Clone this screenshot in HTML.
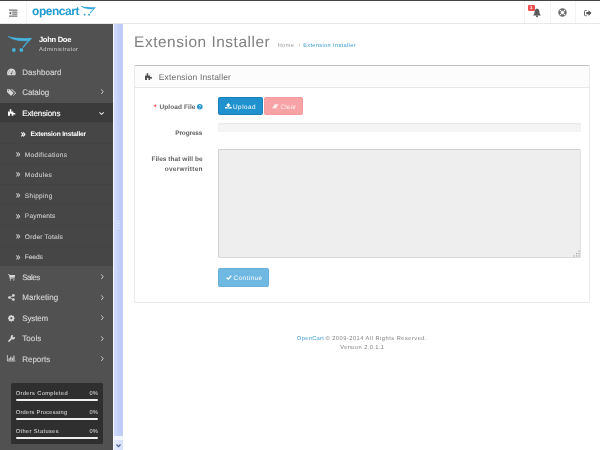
<!DOCTYPE html>
<html lang="en">
<head>
<meta charset="utf-8">
<title>Extension Installer</title>
<style>
*{box-sizing:border-box;margin:0;padding:0}
html,body{width:600px;height:450px;overflow:hidden;background:#fff}
body{font-family:"Liberation Sans",sans-serif;color:#666;font-size:6px;position:relative}
.abs{position:absolute}
svg{position:absolute;overflow:visible}
.t{position:absolute;white-space:nowrap;line-height:1}
#topline{left:0;top:0;width:600px;height:1px;background:#454545}
#header{left:0;top:1px;width:600px;height:23px;background:#fff;border-bottom:1px solid #e8e8e8}
.vdiv{position:absolute;top:0;width:1px;height:22px;background:#f3f3f3}
#side{left:0;top:24px;width:113px;height:426px;background:#515151}
.row{position:absolute;left:0;width:113px}
.sep{position:absolute;left:0;width:113px;height:1px;background:#434343}
.bar{position:absolute;left:16px;width:81.6px;height:2.2px;background:#efefef;border-radius:1.1px}
.btn{position:absolute;border-radius:1.6px}
</style>
</head>
<body>
<div id="wrap" style="position:absolute;left:0;top:0;width:600px;height:450px;will-change:transform;text-rendering:geometricPrecision">
<div class="abs" id="topline"></div>
<div class="abs" id="header">
  <div class="vdiv" style="left:26px"></div>
  <div class="vdiv" style="left:524px"></div>
  <div class="vdiv" style="left:550px"></div>
  <div class="vdiv" style="left:575px"></div>
  <svg id="burger" style="left:9px;top:8px;width:9px;height:8px" viewBox="0 0 9 8">
    <g fill="#555"><rect x="0" y="0.6" width="8.4" height="1"/><rect x="3.2" y="2.6" width="5.2" height="1"/><rect x="3.2" y="4.6" width="5.2" height="1"/><rect x="0" y="6.6" width="8.4" height="1"/><path d="M2.2 2.4 L0 4.1 L2.2 5.8 Z"/></g>
  </svg>
  <div class="abs" id="logo" style="left:32px;top:1.7px;font-size:12px;line-height:16px;font-weight:bold;color:#229dd2;letter-spacing:-.45px;white-space:nowrap">opencart</div>
  <svg id="logocart" style="left:80.7px;top:4.9px;width:14.7px;height:10.2px" viewBox="0 0 25 17" preserveAspectRatio="none">
    <path d="M0.3,0.6 C6,2.6 16,2.8 24.3,2.4 L24.4,2.9 C21,6 18,9 16,11.9 L15.5,11.5 C17.5,8.5 20,6 21.6,4.7 C14,5.4 6,4.6 0.3,0.6 Z" fill="#229dd2" stroke="#229dd2" stroke-width=".7"/>
    <rect x="4.6" y="12.9" width="3" height="3" rx="1" fill="#229dd2"/><rect x="12.3" y="12.9" width="3" height="3" rx="1" fill="#229dd2"/>
  </svg>
  <svg id="bell" style="left:532px;top:7px;width:10px;height:10px" viewBox="0 0 10 10">
    <path d="M5 0.6 C3.2 0.8 2.6 2.4 2.6 4 C2.6 5.6 1.8 6.6 1 7.4 L9 7.4 C8.2 6.6 7.4 5.6 7.4 4 C7.4 2.4 6.8 0.8 5 0.6 Z" fill="#5a5a5a"/>
    <circle cx="5" cy="8.3" r="1" fill="#5a5a5a"/>
  </svg>
  <div class="abs" id="badge" style="left:528px;top:4px;width:6.5px;height:5.5px;background:#f0504f;border-radius:1px;color:#fff;font-size:4.5px;line-height:5.5px;text-align:center;font-weight:bold">1</div>
  <svg id="ring" style="left:558px;top:7.1px;width:9px;height:9px" viewBox="0 0 10 10">
    <circle cx="5" cy="5" r="3.3" fill="none" stroke="#6a6a6a" stroke-width="2.2"/>
    <g stroke="#fff" stroke-width="1.25"><path d="M5 0 V3 M5 7 V10 M0 5 H3 M7 5 H10" transform="rotate(45 5 5)"/></g>
    <circle cx="5" cy="5" r="4.3" fill="none" stroke="#6a6a6a" stroke-width=".6"/>
    <circle cx="5" cy="5" r="2.3" fill="none" stroke="#6a6a6a" stroke-width=".6"/>
  </svg>
  <svg id="signout" style="left:583.9px;top:8.7px;width:7.5px;height:6.2px" viewBox="0 0 7.5 6.2">
    <path d="M2.7 0.5 H1.3 Q0.5 0.5 0.5 1.3 V4.9 Q0.5 5.7 1.3 5.7 H2.7" fill="none" stroke="#5a5a5a" stroke-width=".95"/>
    <path d="M2.3 1.9 H4.5 V0.2 L7.5 3.1 L4.5 6 V4.3 H2.3 Z" fill="#555"/>
  </svg>
</div>

<div class="abs" id="side"></div>
<!-- active + submenu backgrounds -->
<div class="row" id="rowext" style="top:103px;height:19px;background:#3b3b3b"></div>
<div class="row" id="rowsub" style="top:122px;height:144px;background:#464646"></div>
<div class="sep" style="top:122px"></div>
<div class="sep" style="top:142.7px"></div>
<div class="sep" style="top:163.3px"></div>
<div class="sep" style="top:183.8px"></div>
<div class="sep" style="top:204.4px"></div>
<div class="sep" style="top:225px"></div>
<div class="sep" style="top:245.6px"></div>

<!-- scrollbar -->
<div class="abs" id="sbtrack" style="left:113px;top:24px;width:10px;height:426px;background:#f3f6fe"></div>
<div class="abs" id="sbthumb" style="left:114px;top:24px;width:9px;height:412px;background:linear-gradient(90deg,#d2ddfc 0%,#c6d4fa 40%,#bbcaf7 85%,#c8d4f9 100%)"></div>
<svg id="sbgrip" style="left:116px;top:220px;width:4px;height:9px" viewBox="0 0 4 9"><g fill="#d9e2fc"><rect x="0" y="0.8" width="4" height="1"/><rect x="0" y="3.2" width="4" height="1"/><rect x="0" y="5.6" width="4" height="1"/><rect x="0" y="8" width="4" height=".8"/></g></svg>
<div class="abs" id="sbbtn" style="left:114px;top:440px;width:9px;height:10px;background:linear-gradient(90deg,#e6ecfd,#d6e0fb)"></div>
<svg id="sbarrow" style="left:115.6px;top:443.6px;width:5px;height:3.4px" viewBox="0 0 5 3.4"><path d="M0.5 0.5 L2.5 2.6 L4.5 0.5" fill="none" stroke="#4a5c8c" stroke-width="1.1"/></svg>

<!-- profile cart -->
<svg id="pcart" style="left:8px;top:36.4px;width:24px;height:16.6px" viewBox="0 0 25 17" preserveAspectRatio="none">
  <path d="M0.3,0.6 C6,2.6 16,2.8 24.3,2.4 L24.4,2.9 C21,6 18,9 16,11.9 L15.5,11.5 C17.5,8.5 20,6 21.6,4.7 C14,5.4 6,4.6 0.3,0.6 Z" fill="#45b5df" stroke="#45b5df" stroke-width=".7" stroke-linejoin="round"/>
  <rect x="4.3" y="12.6" width="3.6" height="3.5" rx="1.2" fill="#45b5df"/><rect x="12.1" y="12.6" width="3.6" height="3.5" rx="1.2" fill="#45b5df"/>
</svg>

<!-- menu icons -->
<svg id="i1" style="left:7.1px;top:68.9px;width:8.8px;height:6.2px" viewBox="0 0 8.8 6.2">
  <path d="M0.5 6.2 A4.4 4.6 0 1 1 8.3 6.2 Z" fill="#d6d6d6"/>
  <path d="M4.4 4.8 L5.6 1.6" stroke="#515151" stroke-width=".7"/><circle cx="4.4" cy="4.7" r=".8" fill="#515151"/>
  <circle cx="1.7" cy="3.9" r=".45" fill="#515151"/><circle cx="2.6" cy="2" r=".45" fill="#515151"/><circle cx="7.1" cy="3.9" r=".45" fill="#515151"/>
</svg>
<svg id="i2" style="left:6.9px;top:88.7px;width:9.3px;height:6.8px" viewBox="0 0 9.3 6.8">
  <path d="M0 0.2 H2.9 L6.4 3.7 Q6.8 4.1 6.4 4.5 L4.4 6.5 Q4 6.9 3.6 6.5 L0 2.9 Z" fill="#d6d6d6"/>
  <path d="M3.9 0.2 H5.2 L8.9 3.7 Q9.3 4.1 8.9 4.5 L6.8 6.5 Q6.4 6.9 6 6.6 L7.6 4.9 Q8.2 4.1 7.6 3.5 Z" fill="#d6d6d6"/>
  <circle cx="1.3" cy="1.5" r=".6" fill="#515151"/>
</svg>
<svg id="i3" style="left:7.7px;top:108.9px;width:7.4px;height:6.8px" viewBox="0 0 7.3 7.3" preserveAspectRatio="none">
  <path d="M0,2.7 H1.9 V1.9 A1,1 0 1 1 3.1,1.9 V2.7 H5.3 V4.3 H6.2 A0.85,0.85 0 1 1 6.2,5.9 H5.3 V7.3 H3.6 V5.7 A0.8,0.8 0 0 0 2,5.7 V7.3 H0 Z" fill="#ffffff"/>
</svg>
<svg id="i4" style="left:8.2px;top:273.7px;width:7.2px;height:6.6px" viewBox="0 0 7.2 6.6">
  <path d="M0 0.3 H1.3 L1.6 1.1 H7.2 L6.6 3.8 H2.3 L2.5 4.4 H6.6 V5 H1.9 L0.9 0.9 H0 Z" fill="#d6d6d6"/>
  <circle cx="2.5" cy="5.9" r=".7" fill="#d6d6d6"/><circle cx="5.9" cy="5.9" r=".7" fill="#d6d6d6"/>
</svg>
<svg id="i5" style="left:8.2px;top:293.8px;width:6.8px;height:7px" viewBox="0 0 6.8 7">
  <path d="M5.4 1.4 L1.4 3.5 L5.4 5.6" fill="none" stroke="#d6d6d6" stroke-width=".8"/>
  <circle cx="5.4" cy="1.4" r="1.35" fill="#d6d6d6"/><circle cx="1.4" cy="3.5" r="1.35" fill="#d6d6d6"/><circle cx="5.4" cy="5.6" r="1.35" fill="#d6d6d6"/>
</svg>
<svg id="i6" style="left:8.2px;top:314.8px;width:6.6px;height:6.6px" viewBox="0 0 6.6 6.6">
  <circle cx="3.3" cy="3.3" r="2" fill="none" stroke="#d6d6d6" stroke-width="1.7"/>
  <g stroke="#d6d6d6" stroke-width="1.3"><path d="M3.3 0 V6.6 M0 3.3 H6.6"/><path d="M3.3 0 V6.6 M0 3.3 H6.6" transform="rotate(45 3.3 3.3)"/></g>
  <circle cx="3.3" cy="3.3" r="1.05" fill="#515151"/>
</svg>
<svg id="i7" style="left:8.2px;top:334.8px;width:7px;height:7px" viewBox="0 0 7 7">
  <path d="M0.9 6.1 L4.2 2.8" stroke="#d6d6d6" stroke-width="1.5" stroke-linecap="round"/>
  <path d="M6.9 1.7 A2.2 2.2 0 1 1 5.3 0.1 L4.4 1.3 L5.7 2.6 Z" fill="#d6d6d6"/>
</svg>
<svg id="i8" style="left:7px;top:355.4px;width:8.4px;height:6.4px" viewBox="0 0 8.4 6.4">
  <path d="M0.4 0 V6 H8.4" fill="none" stroke="#d6d6d6" stroke-width=".8"/>
  <g fill="#d6d6d6"><rect x="1.6" y="3.2" width="1.1" height="2.2"/><rect x="3.2" y="1.6" width="1.1" height="3.8"/><rect x="4.8" y="2.6" width="1.1" height="2.8"/><rect x="6.4" y="0.6" width="1.1" height="4.8"/></g>
</svg>
<!-- top-level chevrons -->
<svg class="chev" style="left:100.8px;top:89.3px;width:2.6px;height:5.4px" viewBox="0 0 2.6 5.4"><path d="M0.3 0.4 L2.2 2.7 L0.3 5" fill="none" stroke="#cfcfcf" stroke-width=".95"/></svg>
<svg class="chev" style="left:99.4px;top:111.8px;width:5.2px;height:2.8px" viewBox="0 0 5.2 2.8"><path d="M0.4 0.4 L2.6 2.3 L4.8 0.4" fill="none" stroke="#e6e6e6" stroke-width="1.05"/></svg>
<svg class="chev" style="left:100.8px;top:274.2px;width:2.6px;height:5.4px" viewBox="0 0 2.6 5.4"><path d="M0.3 0.4 L2.2 2.7 L0.3 5" fill="none" stroke="#cfcfcf" stroke-width=".95"/></svg>
<svg class="chev" style="left:100.8px;top:294.6px;width:2.6px;height:5.4px" viewBox="0 0 2.6 5.4"><path d="M0.3 0.4 L2.2 2.7 L0.3 5" fill="none" stroke="#cfcfcf" stroke-width=".95"/></svg>
<svg class="chev" style="left:100.8px;top:315.3px;width:2.6px;height:5.4px" viewBox="0 0 2.6 5.4"><path d="M0.3 0.4 L2.2 2.7 L0.3 5" fill="none" stroke="#cfcfcf" stroke-width=".95"/></svg>
<svg class="chev" style="left:100.8px;top:335.7px;width:2.6px;height:5.4px" viewBox="0 0 2.6 5.4"><path d="M0.3 0.4 L2.2 2.7 L0.3 5" fill="none" stroke="#cfcfcf" stroke-width=".95"/></svg>
<svg class="chev" style="left:100.8px;top:356.1px;width:2.6px;height:5.4px" viewBox="0 0 2.6 5.4"><path d="M0.3 0.4 L2.2 2.7 L0.3 5" fill="none" stroke="#cfcfcf" stroke-width=".95"/></svg>
<!-- submenu double chevrons -->
<svg class="dch" style="left:21px;top:131.5px;width:4.4px;height:4.8px" viewBox="0 0 4.4 4.4" preserveAspectRatio="none"><path d="M0.4 0.3 L2 2.2 L0.4 4.1 M2.3 0.3 L3.9 2.2 L2.3 4.1" fill="none" stroke="#fff" stroke-width="1.05"/></svg>
<svg class="dch" style="left:16px;top:152.3px;width:4.2px;height:4.8px" viewBox="0 0 4.4 4.4" preserveAspectRatio="none"><path d="M0.4 0.3 L2 2.2 L0.4 4.1 M2.3 0.3 L3.9 2.2 L2.3 4.1" fill="none" stroke="#cacaca" stroke-width=".95"/></svg>
<svg class="dch" style="left:16px;top:172.4px;width:4.2px;height:4.8px" viewBox="0 0 4.4 4.4" preserveAspectRatio="none"><path d="M0.4 0.3 L2 2.2 L0.4 4.1 M2.3 0.3 L3.9 2.2 L2.3 4.1" fill="none" stroke="#cacaca" stroke-width=".95"/></svg>
<svg class="dch" style="left:16px;top:193.1px;width:4.2px;height:4.8px" viewBox="0 0 4.4 4.4" preserveAspectRatio="none"><path d="M0.4 0.3 L2 2.2 L0.4 4.1 M2.3 0.3 L3.9 2.2 L2.3 4.1" fill="none" stroke="#cacaca" stroke-width=".95"/></svg>
<svg class="dch" style="left:16px;top:213.5px;width:4.2px;height:4.8px" viewBox="0 0 4.4 4.4" preserveAspectRatio="none"><path d="M0.4 0.3 L2 2.2 L0.4 4.1 M2.3 0.3 L3.9 2.2 L2.3 4.1" fill="none" stroke="#cacaca" stroke-width=".95"/></svg>
<svg class="dch" style="left:16px;top:234.2px;width:4.2px;height:4.8px" viewBox="0 0 4.4 4.4" preserveAspectRatio="none"><path d="M0.4 0.3 L2 2.2 L0.4 4.1 M2.3 0.3 L3.9 2.2 L2.3 4.1" fill="none" stroke="#cacaca" stroke-width=".95"/></svg>
<svg class="dch" style="left:16px;top:254.5px;width:4.2px;height:4.8px" viewBox="0 0 4.4 4.4" preserveAspectRatio="none"><path d="M0.4 0.3 L2 2.2 L0.4 4.1 M2.3 0.3 L3.9 2.2 L2.3 4.1" fill="none" stroke="#cacaca" stroke-width=".95"/></svg>

<!-- stats -->
<div class="abs" id="stats" style="left:11px;top:382.6px;width:91.8px;height:61.7px;background:#2f2f2f;border-radius:1.6px"></div>
<div class="bar" style="top:398.8px"></div>
<div class="bar" style="top:418.1px"></div>
<div class="bar" style="top:437px"></div>

<!-- panel -->
<div class="abs" id="panel" style="left:134px;top:65px;width:456px;height:238px;background:#fff;border:1px solid #ebebeb;border-top:1px solid #c0c0c0;border-radius:1.5px"></div>
<div class="abs" id="phead" style="left:135px;top:66px;width:454px;height:22.3px;background:#fcfcfc;border-bottom:1px solid #e8e8e8"></div>
<svg id="picon" style="left:144.5px;top:72.9px;width:7.1px;height:6.9px" preserveAspectRatio="none" viewBox="0 0 7.3 7.3">
  <path d="M0,2.7 H1.9 V1.9 A1,1 0 1 1 3.1,1.9 V2.7 H5.3 V4.3 H6.2 A0.85,0.85 0 1 1 6.2,5.9 H5.3 V7.3 H3.6 V5.7 A0.8,0.8 0 0 0 2,5.7 V7.3 H0 Z" fill="#4d4d4d"/>
</svg>

<!-- help icon -->
<svg id="help" style="left:196.8px;top:103.7px;width:5.6px;height:5.6px" viewBox="0 0 5.2 5.2"><circle cx="2.6" cy="2.6" r="2.6" fill="#1e91cf"/><path d="M1.8 2 C1.8 1.2 3.4 1.2 3.4 2 C3.4 2.6 2.6 2.5 2.6 3.2" fill="none" stroke="#fff" stroke-width=".7"/><circle cx="2.6" cy="4" r=".4" fill="#fff"/></svg>

<div class="btn" id="b1" style="left:218px;top:96.7px;width:44.5px;height:18.7px;background:#1f91ce;border:1px solid #1a7fb6"></div>
<svg id="upicon" style="left:225.3px;top:103.2px;width:6.7px;height:5.6px" viewBox="0 0 6.7 5.6"><path d="M3.35 0 L5.9 2.5 H4.3 V4 H2.4 V2.5 H0.8 Z" fill="#fff"/><path d="M0 3.9 H1.7 V4.5 H5 V3.9 H6.7 V5.6 H0 Z" fill="#fff"/></svg>
<div class="btn" id="b2" style="left:264.3px;top:96.7px;width:39px;height:18.7px;background:#f7a2a5;border:1px solid #f39a9d"></div>
<svg id="ericon" style="left:271.8px;top:103.8px;width:6.6px;height:4.8px" viewBox="0 0 7.5 5.2" preserveAspectRatio="none"><path d="M3.2 0.2 H7.5 L4.6 4.4 H0.3 Z" fill="#fdeeee"/><path d="M0 4.7 H6.6 V5.2 H0 Z" fill="#fdeeee" opacity=".6"/></svg>
<div class="abs" id="prog" style="left:218px;top:123.2px;width:363px;height:8.8px;background:#f4f4f4;border-radius:1.6px;box-shadow:inset 0 .5px 1px rgba(0,0,0,.09)"></div>
<div class="abs" id="ta" style="left:218px;top:148.5px;width:363px;height:109.3px;background:#eeeeee;border:1px solid #d0d0d0;border-right-color:#e0e0e0;border-bottom-color:#dadada;border-radius:1.6px"></div>
<svg id="grip" style="left:572.8px;top:250px;width:7.2px;height:7.2px" viewBox="0 0 7.2 7.2"><g fill="#a4a4a4"><rect x="5.4" y="0.6" width="1.2" height="1.2"/><rect x="5.4" y="3" width="1.2" height="1.2"/><rect x="5.4" y="5.4" width="1.2" height="1.2"/><rect x="3" y="3" width="1.2" height="1.2"/><rect x="3" y="5.4" width="1.2" height="1.2"/><rect x="0.6" y="5.4" width="1.2" height="1.2"/></g></svg>
<div class="btn" id="b3" style="left:218px;top:267.8px;width:51px;height:18.8px;background:#6fb8e1;border:1px solid #68b0da"></div>
<svg id="ckicon" style="left:225.9px;top:275.2px;width:5.9px;height:5px" viewBox="0 0 5.9 5"><path d="M0.6 2.7 L2.2 4.2 L5.3 0.8" fill="none" stroke="#fff" stroke-width="1.3"/></svg>

<div class="t" id="pname" style="left:38.94px;top:36.00px;font-size:7.6px;color:#ffffff;font-weight:bold;letter-spacing:-0.300px;">John Doe</div>
<div class="t" id="prole" style="left:39.06px;top:48.00px;font-size:5.7px;color:#cfcfcf;letter-spacing:0.447px;">Administrator</div>
<div class="t" id="m1" style="left:22.22px;top:69.00px;font-size:8.0px;color:#d2d2d2;letter-spacing:0.015px;-webkit-text-stroke:.15px;">Dashboard</div>
<div class="t" id="m2" style="left:22.22px;top:89.00px;font-size:8.0px;color:#d2d2d2;letter-spacing:-0.103px;-webkit-text-stroke:.15px;">Catalog</div>
<div class="t" id="m3" style="left:22.22px;top:110.00px;font-size:8.0px;color:#ffffff;letter-spacing:-0.098px;-webkit-text-stroke:.15px;">Extensions</div>
<div class="t" id="m4" style="left:22.22px;top:274.00px;font-size:8.0px;color:#d2d2d2;letter-spacing:-0.514px;-webkit-text-stroke:.15px;">Sales</div>
<div class="t" id="m5" style="left:22.22px;top:294.00px;font-size:8.0px;color:#d2d2d2;letter-spacing:0.117px;-webkit-text-stroke:.15px;">Marketing</div>
<div class="t" id="m6" style="left:22.22px;top:315.00px;font-size:8.0px;color:#d2d2d2;letter-spacing:-0.122px;-webkit-text-stroke:.15px;">System</div>
<div class="t" id="m7" style="left:22.22px;top:335.00px;font-size:8.0px;color:#d2d2d2;letter-spacing:0.093px;-webkit-text-stroke:.15px;">Tools</div>
<div class="t" id="m8" style="left:22.22px;top:356.00px;font-size:8.0px;color:#d2d2d2;letter-spacing:-0.009px;-webkit-text-stroke:.15px;">Reports</div>
<div class="t" id="s1" style="left:30.50px;top:132.00px;font-size:6.6px;color:#ffffff;font-weight:bold;letter-spacing:-0.167px;">Extension Installer</div>
<div class="t" id="s2" style="left:24.80px;top:153.00px;font-size:6.6px;color:#c6c6c6;letter-spacing:0.321px;-webkit-text-stroke:.12px;">Modifications</div>
<div class="t" id="s3" style="left:24.80px;top:173.00px;font-size:6.6px;color:#c6c6c6;letter-spacing:0.359px;-webkit-text-stroke:.12px;">Modules</div>
<div class="t" id="s4" style="left:24.80px;top:194.00px;font-size:6.6px;color:#c6c6c6;letter-spacing:0.274px;-webkit-text-stroke:.12px;">Shipping</div>
<div class="t" id="s5" style="left:24.80px;top:214.00px;font-size:6.6px;color:#c6c6c6;letter-spacing:0.181px;-webkit-text-stroke:.12px;">Payments</div>
<div class="t" id="s6" style="left:24.80px;top:235.00px;font-size:6.6px;color:#c6c6c6;letter-spacing:0.209px;-webkit-text-stroke:.12px;">Order Totals</div>
<div class="t" id="s7" style="left:24.80px;top:255.00px;font-size:6.6px;color:#c6c6c6;letter-spacing:-0.059px;-webkit-text-stroke:.12px;">Feeds</div>
<div class="t" id="st1" style="left:15.76px;top:392.00px;font-size:5.7px;color:#e0e0e0;letter-spacing:0.361px;">Orders Completed</div>
<div class="t" id="st2" style="left:15.76px;top:411.00px;font-size:5.7px;color:#e0e0e0;letter-spacing:0.267px;">Orders Processing</div>
<div class="t" id="st3" style="left:15.76px;top:430.00px;font-size:5.7px;color:#e0e0e0;letter-spacing:0.373px;">Other Statuses</div>
<div class="t" id="sp1" style="left:89.46px;top:392.00px;font-size:5.7px;color:#e0e0e0;letter-spacing:0.250px;">0%</div>
<div class="t" id="sp2" style="left:89.46px;top:411.00px;font-size:5.7px;color:#e0e0e0;letter-spacing:0.250px;">0%</div>
<div class="t" id="sp3" style="left:89.46px;top:430.00px;font-size:5.7px;color:#e0e0e0;letter-spacing:0.250px;">0%</div>
<div class="t" id="h1" style="left:134.08px;top:35.00px;font-size:15.4px;color:#808080;letter-spacing:0.549px;">Extension Installer</div>
<div class="t" id="bc1" style="left:277.66px;top:44.00px;font-size:5.6px;color:#9a9a9a;letter-spacing:0.417px;">Home</div>
<div class="t" id="bc2" style="left:298.86px;top:44.00px;font-size:5.6px;color:#b0b0b0;">/</div>
<div class="t" id="bc3" style="left:303.16px;top:44.00px;font-size:5.6px;color:#3a9bd3;letter-spacing:0.370px;">Extension Installer</div>
<div class="t" id="ptitle" style="left:158.79px;top:73.00px;font-size:8.5px;color:#6c6c6c;letter-spacing:0.148px;">Extension Installer</div>
<div class="t" id="l1a" style="left:153.91px;top:105.00px;font-size:6.5px;color:#ee3333;font-weight:bold;">*</div>
<div class="t" id="l1" style="left:159.41px;top:105.00px;font-size:6.5px;color:#626262;font-weight:bold;letter-spacing:0.105px;">Upload File</div>
<div class="t" id="l2" style="left:175.21px;top:131.00px;font-size:6.5px;color:#626262;font-weight:bold;letter-spacing:-0.130px;">Progress</div>
<div class="t" id="l3" style="left:151.41px;top:157.00px;font-size:6.5px;color:#626262;font-weight:bold;letter-spacing:0.057px;">Files that will be</div>
<div class="t" id="l4" style="left:164.71px;top:167.00px;font-size:6.5px;color:#626262;font-weight:bold;letter-spacing:0.283px;">overwritten</div>
<div class="t" id="b1t" style="left:233.02px;top:105.00px;font-size:6.4px;color:#ffffff;letter-spacing:0.480px;">Upload</div>
<div class="t" id="b2t" style="left:280.52px;top:105.00px;font-size:6.4px;color:#fdeeee;letter-spacing:0.097px;">Clear</div>
<div class="t" id="b3t" style="left:233.52px;top:276.00px;font-size:6.4px;color:#ffffff;letter-spacing:0.425px;">Continue</div>
<div class="t" id="f1" style="left:296.86px;top:337.00px;font-size:5.7px;color:#3a9bd3;letter-spacing:0.345px;">OpenCart</div>
<div class="t" id="f2" style="left:325.46px;top:337.00px;font-size:5.7px;color:#808080;letter-spacing:0.494px;">© 2009-2014 All Rights Reserved.</div>
<div class="t" id="f3" style="left:340.26px;top:346.00px;font-size:5.7px;color:#808080;letter-spacing:0.416px;">Version 2.0.1.1</div>
</div>
</body>
</html>
